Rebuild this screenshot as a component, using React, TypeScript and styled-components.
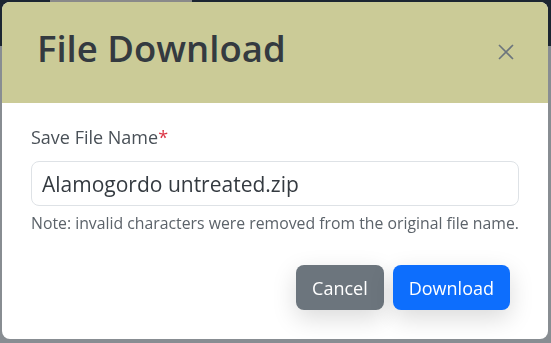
import React from 'react'
import styled, { createGlobalStyle } from 'styled-components'

const GlobalStyle = createGlobalStyle`
    html, body {
        margin: 0;
        padding: 0;
        width: 551px;
        height: 343px;
        overflow: hidden;
        font-family: "Open Sans", "Noto Sans", sans-serif;
    }
`

const Page = styled.div`
    display: grid;
    grid-template-rows: 46px 1fr;
    width: 551px;
    height: 343px;
    background: #888d92;
`

const NavBar = styled.div`
    background: #1c2531;

    &::before {
        content: '';
        display: block;
        margin-left: 50px;
        width: 142px;
        height: 2px;
        background: #8a8a8a;
    }
`

const Dialog = styled.div`
    position: fixed;
    top: 2px;
    left: 2px;
    width: 546px;
    height: 337px;
    display: flex;
    flex-direction: column;
    background: #fff;
    border-radius: 8px;
    overflow: hidden;
`

const Header = styled.div`
    display: flex;
    align-items: flex-start;
    justify-content: space-between;
    height: 101px;
    padding: 25px 34px 0 35px;
    box-sizing: border-box;
    background: #cbcb97;
`

const Title = styled.h1`
    margin: 0;
    font-size: 36.5px;
    font-weight: 600;
    line-height: 1.2;
    color: #343a40;
`

const CloseButton = styled.button`
    border: 0;
    background: transparent;
    padding: 0;
    margin-top: 17px;
    width: 16px;
    height: 16px;
    display: flex;
    align-items: center;
    justify-content: center;
    color: #6c757d;
    cursor: pointer;
`

const Body = styled.div`
    padding: 20px 29px 0 29px;
    display: flex;
    flex-direction: column;
`

const Label = styled.label`
    font-size: 18px;
    line-height: 28px;
    color: #495057;
    margin-bottom: 10px;
`

const Required = styled.span`
    color: #dc3545;
`

const Input = styled.input`
    box-sizing: border-box;
    width: 100%;
    height: 45px;
    padding: 0 10px;
    border: 1px solid #dee2e6;
    border-radius: 8px;
    font-family: inherit;
    font-size: 21px;
    color: #343a40;
    outline: none;
`

const Note = styled.div`
    margin-top: 5px;
    font-size: 15.8px;
    line-height: 24px;
    color: #5c636a;
`

const Footer = styled.div`
    display: flex;
    justify-content: flex-end;
    gap: 9px;
    padding: 30px 38px 0 0;
`

const Button = styled.button<{ variant: 'secondary' | 'primary' }>`
    border: 0;
    border-radius: 8px;
    height: 45px;
    padding: 0 16px;
    font-family: inherit;
    font-size: 18px;
    color: #fff;
    background: ${({ variant }) => (variant === 'primary' ? '#0d6efd' : '#6c757d')};
    box-shadow: 0 8px 24px rgba(0, 0, 0, 0.15);
    cursor: pointer;
`

export default function App() {
    return (
        <>
            <GlobalStyle />
            <Page>
                <NavBar />
                <div />
            </Page>
            <Dialog>
                <Header>
                    <Title>File Download</Title>
                    <CloseButton aria-label="Close">
                        <svg width="16" height="16" viewBox="0 0 16 16">
                            <path d="M1 1 L15 15 M15 1 L1 15" stroke="currentColor" strokeWidth="1.6" fill="none" />
                        </svg>
                    </CloseButton>
                </Header>
                <Body>
                    <Label>
                        Save File Name<Required>*</Required>
                    </Label>
                    <Input defaultValue="Alamogordo untreated.zip" />
                    <Note>Note: invalid characters were removed from the original file name.</Note>
                </Body>
                <Footer>
                    <Button variant="secondary">Cancel</Button>
                    <Button variant="primary">Download</Button>
                </Footer>
            </Dialog>
        </>
    )
}
